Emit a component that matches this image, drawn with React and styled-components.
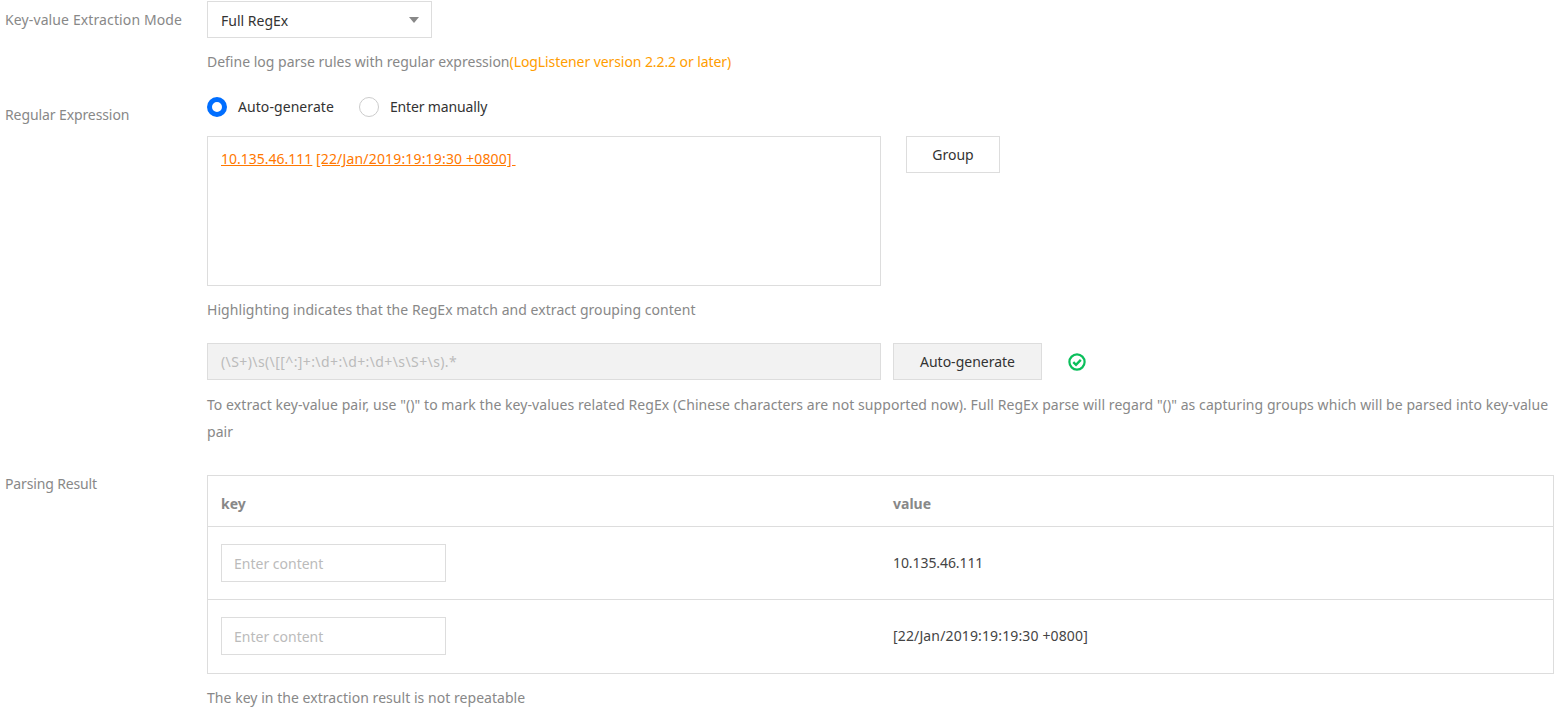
import React from 'react'
import styled, { createGlobalStyle } from 'styled-components'

const GlobalStyle = createGlobalStyle`
  html, body {
    margin: 0;
    background: #fff;
    overflow: hidden;
  }
  body {
    font-family: "Noto Sans", "Open Sans", sans-serif;
    font-size: 14px;
    line-height: 27px;
    color: #333;
  }
`

const Page = styled.div`
  width: 1554px;
  height: 712px;
  padding: 1px 0 0 5px;
  box-sizing: content-box;
  display: flex;
  flex-direction: column;
`
const Row = styled.div`
  display: grid;
  grid-template-columns: 202px 1347px;
  margin-bottom: ${({ $after }) => $after || 0}px;
`
const Label = styled.div`
  color: #888;
  padding-top: ${({ $top }) => $top || 0}px;
  line-height: ${({ $lh }) => $lh || 27}px;
  letter-spacing: ${({ $ls }) => $ls || 0}px;
`
const Field = styled.div`
  display: flex;
  flex-direction: column;
`
const Select = styled.div`
  display: flex;
  align-items: center;
  justify-content: space-between;
  box-sizing: border-box;
  width: 225px;
  height: 37px;
  padding: 1px 12px 0 13px;
  border: 1px solid #ddd;
`
const Caret = styled.span`
  width: 0;
  height: 0;
  border-left: 5px solid transparent;
  border-right: 5px solid transparent;
  border-top: 6px solid #888;
`
const Help = styled.p`
  margin: ${({ $top }) => $top || 0}px 0 0;
  color: #888;
  line-height: 27px;
  letter-spacing: ${({ $ls }) => $ls || 0}px;
`
const Warn = styled.span`
  color: #ff9d00;
  letter-spacing: -0.08px;
`
const Radios = styled.div`
  display: flex;
  align-items: center;
  gap: 25px;
  margin-top: 18px;
  height: 27px;
`
const RadioItem = styled.label`
  display: flex;
  align-items: center;
  gap: 11px;
  letter-spacing: ${({ $ls }) => $ls || 0}px;
`
const RadioDot = styled.span`
  box-sizing: border-box;
  width: 20px;
  height: 20px;
  border-radius: 50%;
  background: #fff;
  border: ${({ $on }) => ($on ? '5px solid #006eff' : '1px solid #ccc')};
`
const EditorRow = styled.div`
  display: flex;
  align-items: flex-start;
  margin-top: 16px;
`
const Editor = styled.div`
  box-sizing: border-box;
  width: 674px;
  height: 150px;
  padding: 8px 13px;
  border: 1px solid #ddd;
  color: #ff7800;
  white-space: pre;
`
const Mark = styled.span`
  text-decoration: underline;
  letter-spacing: ${({ $ls }) => $ls || 0}px;
`
const Button = styled.button`
  box-sizing: border-box;
  width: ${({ $w }) => $w}px;
  height: ${({ $h }) => $h}px;
  margin-left: ${({ $left }) => $left}px;
  padding: 0;
  font: inherit;
  color: #333;
  background: ${({ $grey }) => ($grey ? '#f2f2f2' : '#fff')};
  border: 1px solid #ddd;
`
const RegexRow = styled.div`
  display: flex;
  align-items: center;
  margin-top: 20px;
`
const RegexInput = styled.div`
  box-sizing: border-box;
  width: 674px;
  height: 37px;
  padding: 0 13px;
  line-height: 35px;
  letter-spacing: 0.4px;
  color: #bbb;
  background: #f2f2f2;
  border: 1px solid #ddd;
`
const OkIcon = styled.svg`
  width: 18px;
  height: 18px;
  margin-left: 26px;
`
const Table = styled.div`
  box-sizing: border-box;
  width: 1347px;
  border: 1px solid #ddd;
`
const HeadRow = styled.div`
  display: grid;
  grid-template-columns: 672px 1fr;
  align-items: center;
  box-sizing: border-box;
  height: 50px;
  padding: 4px 0 0 13px;
`
const BodyRow = styled.div`
  display: grid;
  grid-template-columns: 672px 1fr;
  align-items: center;
  box-sizing: border-box;
  height: ${({ $h }) => $h}px;
  padding-left: 13px;
  border-top: 1px solid #ddd;
`
const HeadCell = styled.div`
  color: #888;
  font-weight: 700;
`
const KeyInput = styled.input`
  box-sizing: border-box;
  align-self: start;
  width: 225px;
  height: 38px;
  margin-top: 17px;
  padding: 0 12px;
  font: inherit;
  border: 1px solid #ddd;
  outline: none;
  &::placeholder {
    color: #bbb;
    opacity: 1;
  }
`
const ValueCell = styled.div`
  color: #444;
  padding-bottom: 2px;
  letter-spacing: ${({ $ls }) => $ls || 0}px;
`

const results = [
  { value: '10.135.46.111', height: 73, spacing: -0.08 },
  { value: '[22/Jan/2019:19:19:30 +0800]', height: 74, spacing: 0.14 }
]

export default function App() {
  return (
    <Page>
      <GlobalStyle />
      <Row>
        <Label $top={5} $ls={0.12}>Key-value Extraction Mode</Label>
        <Field>
          <Select>Full RegEx<Caret /></Select>
          <Help $top={10}>
            Define log parse rules with regular expression
            <Warn>(LogListener version 2.2.2 or later)</Warn>
          </Help>
        </Field>
      </Row>
      <Row $after={30}>
        <Label $top={26} $ls={-0.1}>Regular Expression</Label>
        <Field>
          <Radios>
            <RadioItem $ls={0.07}><RadioDot $on />Auto-generate</RadioItem>
            <RadioItem $ls={-0.14}><RadioDot />Enter manually</RadioItem>
          </Radios>
          <EditorRow>
            <Editor><Mark>10.135.46.111</Mark> <Mark $ls={0.17}>[22/Jan/2019:19:19:30 +0800] </Mark></Editor>
            <Button $w={94} $h={37} $left={25}>Group</Button>
          </EditorRow>
          <Help $top={10} $ls={0.055}>Highlighting indicates that the RegEx match and extract grouping content</Help>
          <RegexRow>
            <RegexInput>(\S+)\s(\[[^:]+:\d+:\d+:\d+\s\S+\s).*</RegexInput>
            <Button $w={149} $h={37} $left={12} $grey>Auto-generate</Button>
            <OkIcon viewBox="0 0 18 18" fill="none" stroke="#0abf5b" strokeWidth="2.2">
              <circle cx="9" cy="9" r="7.6" />
              <path d="M5.3 9.1l2.7 2.7 4.8-5" strokeWidth="2.4" />
            </OkIcon>
          </RegexRow>
          <Help $top={11} $ls={0.066}>
            To extract key-value pair, use "()" to mark the key-values related RegEx (Chinese characters are not supported now). Full RegEx parse will regard "()" as capturing groups which will be parsed into key-value pair
          </Help>
        </Field>
      </Row>
      <Row>
        <Label $lh={18} $ls={-0.15}>Parsing Result</Label>
        <Field>
          <Table>
            <HeadRow>
              <HeadCell>key</HeadCell>
              <HeadCell>value</HeadCell>
            </HeadRow>
            {results.map(r => (
              <BodyRow key={r.value} $h={r.height}>
                <KeyInput placeholder="Enter content" />
                <ValueCell $ls={r.spacing}>{r.value}</ValueCell>
              </BodyRow>
            ))}
          </Table>
          <Help $top={10} $ls={0.04}>The key in the extraction result is not repeatable</Help>
        </Field>
      </Row>
    </Page>
  )
}
